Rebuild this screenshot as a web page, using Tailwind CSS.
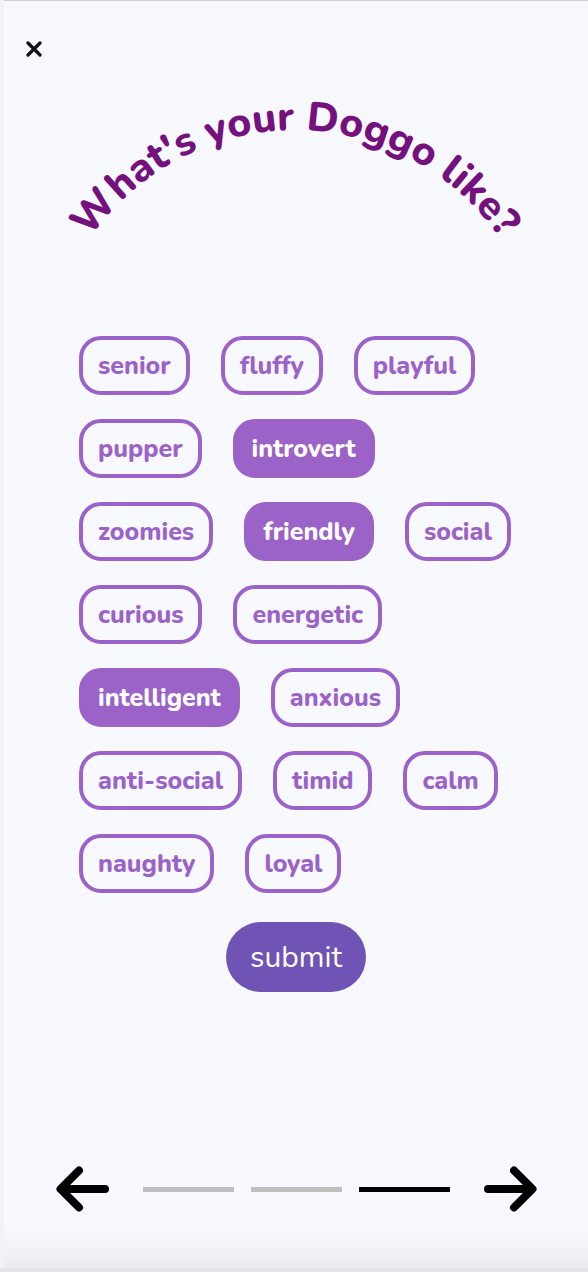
<!DOCTYPE html>
<html lang="en">
<head>
<meta charset="utf-8">
<meta name="viewport" content="width=device-width, initial-scale=1">
<title>What's your Doggo like?</title>
<script src="https://cdn.jsdelivr.net/npm/@tailwindcss/browser@4"></script>
</head>
<body class="min-h-screen border-b-4 border-[#e4e5e4] bg-[#f3f3f4] pl-1 font-[Nunito,Lato,sans-serif]">
<main class="flex min-h-[calc(100vh-4px)] flex-col border-t border-[#d0d0d4] bg-[#f8f8ff]">
  <header class="pt-9 pl-[18px]">
    <button type="button" aria-label="Close" class="block p-1">
      <svg class="size-4" viewBox="0 0 16 16" fill="none" stroke="#111" stroke-width="3.200" stroke-linecap="round"><path d="M2 2 14 14M14 2 2 14"/></svg>
    </button>
  </header>

  <h1 class="mt-5 flex justify-center">
    <svg class="h-[180px] w-[480px]" viewBox="0 0 480 180" aria-label="What's your Doggo like?">
      <path id="arc" d="M-9 297A248 248 0 0 1 487 297" fill="none"/>
      <text class="fill-[#74117c] text-[41px] font-extrabold" text-anchor="middle"><textPath href="#arc" startOffset="50%">What's your Doggo like?</textPath></text>
    </svg>
  </h1>

  <form class="mt-[75px] flex flex-col items-center" onsubmit="return false">
    <div class="flex w-full flex-wrap gap-x-[31px] gap-y-6 pr-[60px] pl-[75px] text-[25px] leading-8 font-extrabold text-[#9b62c8]">
      <button type="button" aria-pressed="false" class="h-[59px] rounded-[22px] border-4 border-[#9b62c8] px-[15px]">senior</button>
      <button type="button" aria-pressed="false" class="h-[59px] rounded-[22px] border-4 border-[#9b62c8] px-[15px]">fluffy</button>
      <button type="button" aria-pressed="false" class="h-[59px] rounded-[22px] border-4 border-[#9b62c8] px-[15px]">playful</button>
      <button type="button" aria-pressed="false" class="h-[59px] rounded-[22px] border-4 border-[#9b62c8] px-[15px]">pupper</button>
      <button type="button" aria-pressed="true" class="h-[59px] rounded-[22px] border-4 border-[#9b62c8] bg-[#9b62c8] px-[15px] text-white">introvert</button>
      <button type="button" aria-pressed="false" class="h-[59px] rounded-[22px] border-4 border-[#9b62c8] px-[15px]">zoomies</button>
      <button type="button" aria-pressed="true" class="h-[59px] rounded-[22px] border-4 border-[#9b62c8] bg-[#9b62c8] px-[15px] text-white">friendly</button>
      <button type="button" aria-pressed="false" class="h-[59px] rounded-[22px] border-4 border-[#9b62c8] px-[15px]">social</button>
      <button type="button" aria-pressed="false" class="h-[59px] rounded-[22px] border-4 border-[#9b62c8] px-[15px]">curious</button>
      <button type="button" aria-pressed="false" class="h-[59px] rounded-[22px] border-4 border-[#9b62c8] px-[15px]">energetic</button>
      <button type="button" aria-pressed="true" class="h-[59px] rounded-[22px] border-4 border-[#9b62c8] bg-[#9b62c8] px-[15px] text-white">intelligent</button>
      <button type="button" aria-pressed="false" class="h-[59px] rounded-[22px] border-4 border-[#9b62c8] px-[15px]">anxious</button>
      <button type="button" aria-pressed="false" class="h-[59px] rounded-[22px] border-4 border-[#9b62c8] px-[15px]">anti-social</button>
      <button type="button" aria-pressed="false" class="h-[59px] rounded-[22px] border-4 border-[#9b62c8] px-[15px]">timid</button>
      <button type="button" aria-pressed="false" class="h-[59px] rounded-[22px] border-4 border-[#9b62c8] px-[15px]">calm</button>
      <button type="button" aria-pressed="false" class="h-[59px] rounded-[22px] border-4 border-[#9b62c8] px-[15px]">naughty</button>
      <button type="button" aria-pressed="false" class="h-[59px] rounded-[22px] border-4 border-[#9b62c8] px-[15px]">loyal</button>
    </div>
    <button type="submit" class="mt-[29px] h-[70px] rounded-full bg-[#6f54b5] px-6 text-[30px] text-white">submit</button>
  </form>

  <footer class="mt-auto bg-linear-to-b from-[#f8f8ff] from-60% to-[#ececf0] pb-14">
    <nav aria-label="Steps" class="flex items-center justify-center gap-[34px]">
      <button type="button" aria-label="Previous">
        <svg class="h-[46px] w-[53px]" viewBox="0 0 53 46" fill="none" stroke="#000" stroke-width="8" stroke-linecap="round" stroke-linejoin="round"><path d="M23 4.500 4.500 23 23 41.500M5 23H49"/></svg>
      </button>
      <div class="flex gap-[17px]">
        <span class="h-[5px] w-[91px] bg-[#bfbfbf]"></span>
        <span class="h-[5px] w-[91px] bg-[#bfbfbf]"></span>
        <span class="h-[5px] w-[91px] bg-black"></span>
      </div>
      <button type="button" aria-label="Next">
        <svg class="h-[46px] w-[53px]" viewBox="0 0 53 46" fill="none" stroke="#000" stroke-width="8" stroke-linecap="round" stroke-linejoin="round"><path d="M30 4.500 48.500 23 30 41.500M48 23H4"/></svg>
      </button>
    </nav>
  </footer>
</main>
</body>
</html>
